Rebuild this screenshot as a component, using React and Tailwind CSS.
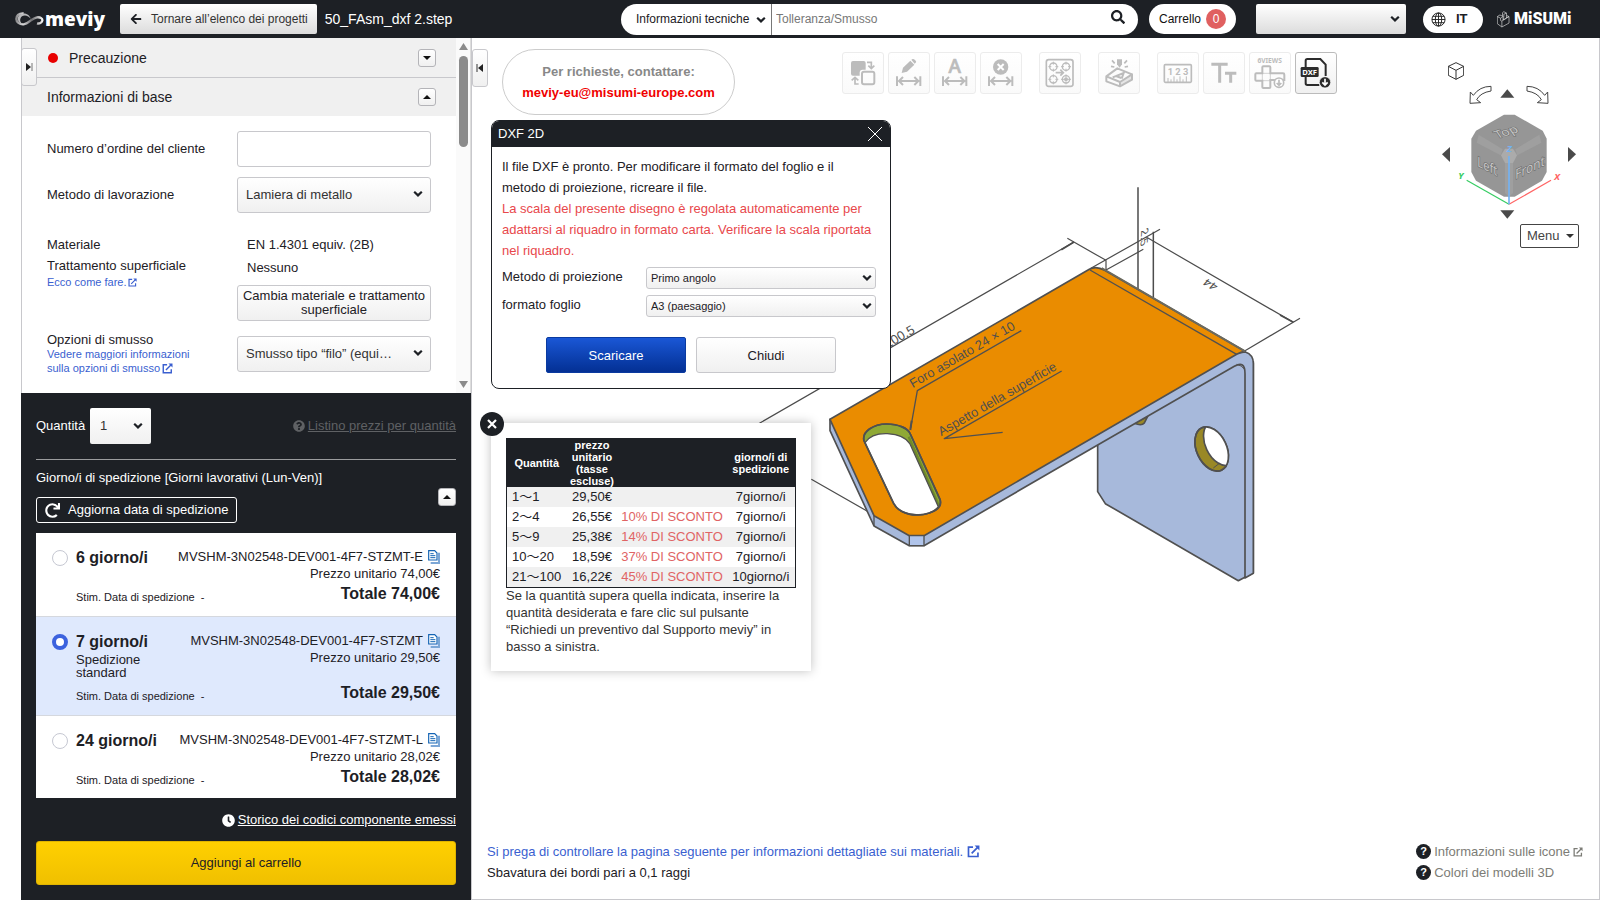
import React from "react";
import { FaArrowLeft, FaSearch, FaQuestionCircle, FaClock, FaRedo } from "react-icons/fa";

const panelButton = "border border-[#c8c8cc] rounded-[3px] bg-gradient-to-b from-white to-[#f0f0f0]";

function Chevron({ className }) {
  return (
    <svg viewBox="0 0 10 8" className={"pointer-events-none absolute h-2 w-[10px] " + className} aria-hidden="true">
      <path d="M1.2 1.8 5 5.4 8.8 1.8" fill="none" stroke="#1d2025" strokeWidth="2.2" />
    </svg>
  );
}

function ExternalIcon({ className }) {
  return (
    <svg viewBox="0 0 14 14" className={"inline-block shrink-0 " + className} fill="none" stroke="currentColor" strokeWidth="1.8" aria-hidden="true">
      <path d="M6.5 2.2H1.6v10.2h10.2V8M5 9l7-7" />
      <path d="M8.2.6h5.200v5.200Z" fill="currentColor" stroke="none" />
    </svg>
  );
}

function HelpBadge() {
  return (
    <span aria-hidden="true" className="flex h-[15px] w-[15px] shrink-0 items-center justify-center rounded-full bg-[#1d2025] text-[11px] leading-none font-bold text-white">?</span>
  );
}

function Toggle({ up, label }) {
  return (
    <button aria-label={label} className="flex h-[18px] w-[18px] shrink-0 items-center justify-center rounded-[3px] border border-[#b4b4b8] bg-gradient-to-b from-white to-[#f0f0f0]">
      <svg viewBox="0 0 8 4" className="h-1 w-2" fill="#111">
        <path d={up ? "M0 4 4 0 8 4Z" : "M0 0h8L4 4Z"} />
      </svg>
    </button>
  );
}

function CopyIcon() {
  return (
    <svg viewBox="0 0 36 42" className="h-[14px] w-3" aria-hidden="true">
      <path d="M33 8v31H8" fill="none" stroke="#7ba6d6" strokeWidth="6" />
      <path d="M2 2h18l7 7v21H2Z" fill="#fff" stroke="#1565b5" strokeWidth="3.500" />
      <path d="M7 11h10M7 17h15M7 23h15" stroke="#1565b5" strokeWidth="3" />
    </svg>
  );
}

function Header() {
  return (
    <header className="flex h-[38px] shrink-0 items-center bg-[#1d2025] pr-[28px] pl-[15px] text-xs text-white">
      <a href="#" className="flex w-[105px] items-center" aria-label="meviy">
        <svg viewBox="0 0 87 42" className="h-[14px] w-[29px]">
          <defs>
            <linearGradient id="loop" x1="0" x2="1">
              <stop offset="0" stopColor="#8d8d8f" />
              <stop offset=".25" stopColor="#d9d9da" />
              <stop offset=".6" stopColor="#6f6f72" />
              <stop offset="1" stopColor="#f1f1f1" />
            </linearGradient>
          </defs>
          <path d="M26 4C10 3 4 12 4 21s9 17 22 16c15-1 24-19 40-21 11-1 17 4 16 10s-9 10-16 8" fill="none" stroke="url(#loop)" strokeWidth="7" />
          <path d="M14 8C4 17 8 33 24 37c-9-5-12-16-3-24 8-6 20-2 26 7-4-15-22-20-33-12Z" fill="#b9b9bb" />
        </svg>
        <span className="ml-px font-['Open_Sans',sans-serif] text-[19px] leading-[24px] font-extrabold">meviy</span>
      </a>
      <button className="flex h-[30px] items-center gap-[9px] rounded-[2px] bg-gradient-to-b from-white to-[#dcdcdc] px-[10px] pr-[9px] text-[#333]">
        <FaArrowLeft className="h-3 w-3 text-[#1d2025]" />
        Tornare all’elenco dei progetti
      </button>
      <h1 className="ml-2 text-sm">50_FAsm_dxf 2.step</h1>
      <div className="ml-auto flex items-center">
        <form className="flex h-[31px] w-[517px] items-center overflow-hidden rounded-full bg-white text-[#1d2025]" onSubmit={(e) => e.preventDefault()}>
          <div className="relative h-full w-[151px] border-r border-[#777]">
            <select aria-label="Categoria di ricerca" className="h-full w-full appearance-none bg-transparent pl-[15px]">
              <option>Informazioni tecniche</option>
            </select>
            <Chevron className="top-3 right-[5px]" />
          </div>
          <input aria-label="Cerca" placeholder="Tolleranza/Smusso" className="h-full min-w-0 flex-1 bg-transparent px-1 outline-none placeholder:text-[#777]" />
          <button aria-label="Avvia ricerca" className="mr-[13px] mb-1">
            <FaSearch className="h-[14px] w-[14px]" />
          </button>
        </form>
        <button className="ml-[11px] flex h-[30px] w-[87px] items-center gap-[5px] rounded-full bg-white pl-[10px] text-[#111]">
          Carrello
          <span className="flex h-5 w-5 items-center justify-center rounded-full bg-[#e06060] text-white">0</span>
        </button>
        <div className="relative ml-5 h-[30px] w-[150px]">
          <select aria-label="Account" className="h-full w-full appearance-none rounded-[2px] bg-gradient-to-b from-white to-[#dcdcdc] pl-3 text-[#222]">
            <option> </option>
          </select>
          <Chevron className="top-[11px] right-[6px]" />
        </div>
        <button className="ml-[17px] flex h-[27px] w-[60px] items-center gap-[10px] rounded-full bg-white pl-2 text-[#1d2025]">
          <svg viewBox="0 0 16 16" className="h-[15px] w-[15px]" fill="none" stroke="#222" strokeWidth="1">
            <circle cx="8" cy="8" r="7" />
            <ellipse cx="8" cy="8" rx="3.4" ry="7" />
            <path d="M8 1v14M1 8h14M2 4.6h12M2 11.4h12" />
          </svg>
          <span className="text-[13px] font-bold">IT</span>
        </button>
        <a href="#" className="ml-[14px] flex items-center gap-1" aria-label="MiSUMi">
          <svg viewBox="0 0 40 50" className="h-[17px] w-[13px]" fill="none" stroke="#ddd" strokeWidth="2">
            <path d="m1 16 10 5 8-5v10l10-5V5l-8-4-4 3v11M1 16l8-5 10 5M1 16v22l14 10V30l-4-2v-7M15 48l22-12V16l-8 4M15 30l4-3v-6M29 21l-10 6M29 5l-8 4v10M29 20l8-4-8-4" />
          </svg>
          <span className="w-[58px] font-['Roboto',sans-serif] text-base leading-5 font-black">MiSUMi</span>
        </a>
      </div>
    </header>
  );
}

function FormSelect({ id, children, className = "" }) {
  return (
    <div className={"relative h-9 w-[194px] " + className}>
      <select id={id} className={"h-full w-full appearance-none pl-2 text-[13px] text-[#333] " + panelButton}>
        <option>{children}</option>
      </select>
      <Chevron className="top-[13px] right-2" />
    </div>
  );
}

function BaseInfo() {
  return (
    <section className="relative flex min-h-0 flex-1 overflow-hidden border-l border-[#c8c8cc] bg-white">
      <div className="min-w-0 flex-1">
        <div className="flex h-10 items-center border-b border-[#c8c8cc] bg-[#f0f0f0] pr-5 pl-[26px] text-sm">
          <span className="mr-[11px] h-[10px] w-[10px] rounded-full bg-[#e80000]" />
          <h2 className="flex-1">Precauzione</h2>
          <Toggle label="Apri precauzione" />
        </div>
        <div className="flex h-[38px] items-center bg-[#f0f0f0] pr-5 pl-[25px] text-sm">
          <h2 className="flex-1">Informazioni di base</h2>
          <Toggle up label="Chiudi informazioni di base" />
        </div>
        <div className="grid grid-cols-[190px_194px] pt-[15px] pl-[25px]">
          <label htmlFor="ordine" className="mb-[10px] self-center">Numero d’ordine del cliente</label>
          <input id="ordine" className="mb-[10px] h-9 w-full rounded-[3px] border border-[#c8c8cc] px-2" />
          <label htmlFor="metodo" className="self-center">Metodo di lavorazione</label>
          <FormSelect id="metodo">Lamiera di metallo</FormSelect>
          <div className="mt-[21px] leading-[21px]">
            <p>Materiale</p>
            <p>Trattamento superficiale</p>
            <a href="#" className="flex items-center gap-[2px] text-[11px] leading-3 text-[#3a5fd0]">
              Ecco come fare. <ExternalIcon className="h-[9px] w-[9px]" />
            </a>
          </div>
          <div className="mt-5 leading-[23px]">
            <p className="pl-[10px]">EN 1.4301 equiv. (2B)</p>
            <p className="pl-[10px]">Nessuno</p>
            <button className={"mt-[6px] h-9 w-full leading-[14px] " + panelButton}>Cambia materiale e trattamento superficiale</button>
          </div>
          <div className="mt-[11px]">
            <label htmlFor="smusso" className="block leading-[15px]">Opzioni di smusso</label>
            <a href="#" className="block text-[11px] leading-[14px] text-[#3a5fd0]">
              Vedere maggiori informazioni
              <span className="flex items-center gap-[2px]">sulla opzioni di smusso <ExternalIcon className="h-[11px] w-[11px]" /></span>
            </a>
          </div>
          <FormSelect id="smusso" className="mt-[15px]">Smusso tipo “filo” (equi…</FormSelect>
        </div>
        <div className="mt-[18px] h-1 border-t border-[#c8c8cc] bg-[#f0f0f0]" />
      </div>
      <div className="flex w-[15px] flex-col items-center border-r border-[#ddd] bg-[#fafafa] py-[5px]">
        <svg viewBox="0 0 9 7" className="h-[7px] w-[9px]" fill="#8b8b8b"><path d="M0 7 4.500 0 9 7Z" /></svg>
        <div className="mt-[6px] h-[91px] w-[9px] rounded-full bg-[#8b8b8b]" />
        <svg viewBox="0 0 9 7" className="mt-auto h-[7px] w-[9px]" fill="#8b8b8b"><path d="M0 0h9L4.500 7Z" /></svg>
      </div>
      <button aria-label="Espandi pannello" className={"absolute top-[10px] -left-px flex h-[38px] w-4 items-center justify-center " + panelButton}>
        <svg viewBox="0 0 8 8" className="h-2 w-2"><path d="M1 0v8l5-4Z" fill="#222" /><path d="M7 0v8" stroke="#777" /></svg>
      </button>
    </section>
  );
}

const offers = [
  { days: "6 giorno/i", code: "MVSHM-3N02548-DEV001-4F7-STZMT-E", unit: "74,00€", total: "74,00€" },
  { days: "7 giorno/i", note: "Spedizione standard", code: "MVSHM-3N02548-DEV001-4F7-STZMT", unit: "29,50€", total: "29,50€", selected: true },
  { days: "24 giorno/i", code: "MVSHM-3N02548-DEV001-4F7-STZMT-L", unit: "28,02€", total: "28,02€" },
];

function Offer({ offer }) {
  return (
    <li className={"flex border-b border-[#d5d8de] px-4 pt-[15px] pb-3 last:border-b-0 last:pb-[11px] " + (offer.selected ? "bg-[#dfe9fd]" : "bg-white")}>
      <input
        type="radio"
        name="offerta"
        defaultChecked={offer.selected}
        aria-label={offer.days}
        className="mt-[2px] mr-2 h-4 w-4 shrink-0 appearance-none rounded-full border border-[#c6c8d2] bg-white checked:border-[4px] checked:border-[#3c62de]"
      />
      <div className="min-w-0 flex-1">
        <div className="flex justify-between">
          <div>
            <p className="text-base leading-[19px] font-bold">{offer.days}</p>
            {offer.note && <p className="mt-[2px] mb-[2px] w-[70px] leading-[13px]">{offer.note}</p>}
          </div>
          <div className="text-right leading-[17px]">
            <p className="flex items-center justify-end gap-[5px]">{offer.code}<button aria-label="Copia codice"><CopyIcon /></button></p>
            <p>Prezzo unitario {offer.unit}</p>
          </div>
        </div>
        <div className="mt-[2px] flex items-end justify-between">
          <p className="text-[11px] leading-[14px]">Stim. Data di spedizione&nbsp; -</p>
          <p className="text-base leading-5 font-bold">Totale {offer.total}</p>
        </div>
      </div>
    </li>
  );
}

function QuotePanel() {
  return (
    <section className="shrink-0 bg-[#1d2025] px-[15px] py-[15px] text-white">
      <div className="flex h-9 items-center">
        <label htmlFor="quantita" className="w-[54px]">Quantità</label>
        <div className="relative h-9 w-[61px]">
          <select id="quantita" className="h-full w-full appearance-none rounded-[2px] bg-gradient-to-b from-white to-[#f0f0f0] pl-[10px] text-[#333]">
            <option>1</option>
          </select>
          <Chevron className="top-[14px] right-2" />
        </div>
        <a href="#" className="ml-auto flex items-center gap-[3px] text-[#5f6164] underline">
          <FaQuestionCircle className="h-3 w-3" />Listino prezzi per quantità
        </a>
      </div>
      <div className="mt-[15px] border-t border-[#9b9c9e]" />
      <h3 className="mt-[9px] leading-[18px]">Giorno/i di spedizione [Giorni lavorativi (Lun-Ven)]</h3>
      <div className="mt-px flex items-start justify-between">
        <button className="mt-[9px] flex h-[26px] w-[201px] items-center gap-2 rounded-[3px] border border-white pl-2">
          <FaRedo className="h-[15px] w-[15px]" />Aggiorna data di spedizione
        </button>
        <Toggle up label="Chiudi giorni di spedizione" />
      </div>
      <ul className="mt-[10px] text-[#1d2025]">
        {offers.map((o) => <Offer key={o.code} offer={o} />)}
      </ul>
      <div className="mt-[13px] flex justify-end leading-[18px]">
        <a href="#" className="flex items-center gap-[3px] underline"><FaClock className="h-[13px] w-[13px]" />Storico dei codici componente emessi</a>
      </div>
      <button className="mt-3 h-11 w-full rounded-[3px] border border-[#e0b400] bg-gradient-to-b from-[#ffd000] to-[#f0c000] text-[#1d2025]">Aggiungi al carrello</button>
    </section>
  );
}

const dimension = <path d="M27 73v29M97 73v29M32 87h60M45 75 33 87l12 12M79 75l12 12-12 12" strokeWidth="6" />;

const toolGroups = [
  [
    {
      label: "Scambia facce",
      art: (
        <>
          <path d="M33 27h32q6 0 6 6v20H62q-9 0-9 9v9H33q-6 0-6-6V33q0-6 6-6Z" fill="currentColor" stroke="none" />
          <rect x="60" y="59" width="37" height="38" rx="6" strokeWidth="6" />
          <path d="M75 31h13v18M79 41l9 9 9-9M50 96H39V77M29 85l10-9 10 9" strokeWidth="5" />
        </>
      ),
    },
    {
      label: "Modifica quota",
      art: (
        <>
          <path d="m41 63 4-16 22-21 12 12-22 21ZM70 23l4-2q3-1 6 2l3 3q3 3 0 6l-3 3Z" fill="currentColor" stroke="none" />
          {dimension}
        </>
      ),
    },
    {
      label: "Testo quota",
      art: (
        <>
          <text x="62" y="63" textAnchor="middle" fontSize="57" fontWeight="500" fontFamily="Noto Sans, sans-serif" fill="currentColor" stroke="currentColor" strokeWidth="2">A</text>
          {dimension}
        </>
      ),
    },
    {
      label: "Elimina quota",
      art: (
        <>
          <circle cx="62" cy="45" r="23" fill="currentColor" stroke="none" />
          <path d="m53 36 18 18M71 36 53 54" stroke="#fff" strokeWidth="6" />
          {dimension}
        </>
      ),
    },
  ],
  [
    {
      label: "Gruppo fori",
      art: (
        <>
          <rect x="22" y="23" width="80" height="80" rx="7" strokeWidth="5" />
          {[[43, 44], [81, 44], [43, 82], [81, 82]].map(([x, y]) => (
            <g key={x + "-" + y} strokeWidth="4">
              <circle cx={x} cy={y} r="11" />
              <path d={`M${x - 15} ${y}h9M${x + 6} ${y}h9M${x} ${y - 15}v9M${x} ${y + 6}v9`} strokeWidth="3" />
            </g>
          ))}
          <circle cx="81" cy="82" r="6" fill="currentColor" stroke="none" />
          <path d="M50 62h22M64 53l9 9-9 9" strokeWidth="5" />
        </>
      ),
    },
  ],
  [
    {
      label: "Marcatura",
      art: (
        <>
          <path d="m25 73 33-24 44 18-36 23ZM25 73v15l41 15 36-20V67L66 90v13" strokeWidth="6" strokeLinejoin="round" />
          <path d="M66 90l36-23v16l-36 20Z" fill="currentColor" fillOpacity=".35" stroke="none" />
          <path d="m44 76 33-13-6 17M54 72l16 6" strokeWidth="6" />
          <path d="M57 22h15v15l-7 10-8-10Z" fill="currentColor" stroke="none" />
          <path d="m42 25 8 9M39 43l10 2M87 25l-8 9M90 43l-10 2" strokeWidth="5" />
        </>
      ),
    },
  ],
  [
    {
      label: "Misura",
      art: (
        <>
          <rect x="22" y="38" width="81" height="53" rx="3" strokeWidth="5" />
          <text x="63" y="69" textAnchor="middle" fontSize="28" fontWeight="700" fontFamily="Roboto, sans-serif" fill="currentColor" stroke="none">1 2 3</text>
          <path d="M33 78v13M42 82v9M51 73v18M60 82v9M69 73v18M78 82v9M88 73v18" strokeWidth="3" />
        </>
      ),
    },
    { label: "Testo", art: <path d="M25 37h49M50 37v55M66 64h34M83 64v28" strokeWidth="9" /> },
    {
      label: "6 viste",
      art: (
        <>
          <text x="62" y="33" textAnchor="middle" fontSize="20" fontWeight="700" fontFamily="Noto Sans, sans-serif" fill="currentColor" stroke="none">6VIEWS</text>
          <path d="M43 43h18q3 0 3 3v18h38q4 0 4 4v16H64v21q0 3-3 3H43q-3 0-3-3V86H22q-3 0-3-3V67q0-3 3-3h18V46q0-3 3-3Z" strokeWidth="6" />
          <path d="M40 64h24v22H40Z" strokeWidth="2" />
          <circle cx="90" cy="92" r="14" fill="#fff" strokeWidth="5" />
          <path d="M90 83v16M83 93l7 7 7-7" strokeWidth="5" />
        </>
      ),
    },
    {
      label: "DXF 2D",
      active: true,
      art: (
        <>
          <path d="M32 45V26q0-5 5-5h39l16 17v34M32 74v20q0 5 5 5h36" strokeWidth="6" />
          <rect x="17" y="45" width="54" height="30" rx="4" fill="currentColor" stroke="none" />
          <text x="44" y="68" textAnchor="middle" fontSize="23" fontWeight="700" fontFamily="Noto Sans, sans-serif" fill="#fff" stroke="none">DXF</text>
          <circle cx="90" cy="91" r="17" fill="currentColor" stroke="#fff" strokeWidth="2" />
          <path d="M90 80v18M82 91l8 8 8-8" stroke="#fff" strokeWidth="5" />
        </>
      ),
    },
  ],
];

function Toolbar() {
  return (
    <div className="absolute top-[14px] right-[262px] flex gap-[17px]">
      {toolGroups.map((group) => (
        <div key={group[0].label} className="flex gap-1">
          {group.map((t) => (
            <button
              key={t.label}
              aria-label={t.label}
              className={"h-[42px] w-[42px] rounded-[3px] border bg-gradient-to-b from-white " + (t.active ? "border-[#bbb] to-[#f0f0f0] text-[#2b2b2b]" : "border-[#ececec] to-[#fafafa] text-[#bcbcbc]")}
            >
              <svg viewBox="3 3 120 120" className="h-10 w-10" fill="none" stroke="currentColor">{t.art}</svg>
            </button>
          ))}
        </div>
      ))}
    </div>
  );
}

function Model() {
  return (
    <svg className="absolute inset-0 h-full w-full" aria-label="Modello 3D" fontFamily="Liberation Sans, sans-serif">
      <defs>
        <clipPath id="hole"><ellipse cx="1235" cy="807" rx="45" ry="70" transform="rotate(-25 1235 807)" /></clipPath>
      </defs>
      <g transform="translate(328 142) scale(.333333)" fill="none" stroke="#505050" strokeWidth="5" strokeLinejoin="round">
        <g strokeWidth="3.600" stroke="#4c4c4c">
          <path d="M822 186-150 746M34 898l188 107M802 175l116 66v32M870 266l210-118M918 270l112-62M1040 172l440 255M1330 515l170-100" />
          <path d="M1014 22v310M1060 155v202" strokeWidth="4.500" />
          <path d="m822 186-38 23M1480 427l-40-22" strokeWidth="5" />
        </g>
        <path d="M893 780v155l23 36 399 231 45-24V545L1320 530Z" fill="#a7b9db" />
        <ellipse cx="1235" cy="807" rx="45" ry="70" transform="rotate(-25 1235 807)" fill="#998826" />
        <g clipPath="url(#hole)">
          <ellipse cx="1261" cy="790" rx="45" ry="70" transform="rotate(-25 1261 790)" fill="#fff" />
          <path d="m1240 864 18-14" strokeWidth="3" />
        </g>
        <ellipse cx="1235" cy="807" rx="45" ry="70" transform="rotate(-25 1235 807)" />
        <path d="M1003 730q22 9 30-1l10-20Z" fill="#998826" />
        <path d="M90 718v34l132 286 106 59h44l521-302 410-236q32-19 32 22v613l25-14V550q0-26-24-34l-36 5-938 544Z" fill="#a7b9db" />
        <path d="m1310 553q14 2 25 16" strokeWidth="3" />
        <path d="M90 718 868 268q20-12 46 3l421 243q-12 2-25 9L372 1067h-44l-106-60Z" fill="#ea8c00" />
        <path d="m870 270 440 253" strokeWidth="4" />
        <path d="m905 264 430 250" stroke="#6c6a5e" strokeWidth="6" />
        <path d="M328 1067h44v30h-44Z" fill="#b0c4ea" strokeWidth="4" />
        <path d="M222 1007v31" strokeWidth="4" />
        <path d="M192 782C185 755 220 732 260 732c35 0 65 13 71 30l89 196c5 17-5 32-30 40-40 14-90 7-109-28Z" fill="#8fa935" />
        <path d="M326 770 417 978" stroke="#6f8a2a" strokeWidth="7" />
        <path d="M195 788c15-23 40-28 67-27 33 2 58 14 68 31l85 188c-15 20-45 25-65 24-35-1-60-14-70-36Z" fill="#fff" strokeWidth="4" />
        <path d="M192 782C185 755 220 732 260 732c35 0 65 13 71 30l89 196c5 17-5 32-30 40-40 14-90 7-109-28Z" />
        <path d="M664 452 352 632l-20 112M785 573 433 776l175-19" strokeWidth="4" />
        <path d="m335 722-4 28" strokeWidth="6" />
        <g fill="#4f4f4f" stroke="none">
          <text fontSize="39" transform="translate(338 625) rotate(-30)">Foro asolato 24 × 10</text>
          <text fontSize="39" transform="translate(424 769) rotate(-30)">Aspetto della superficie</text>
          <text fontSize="39" textAnchor="end" transform="translate(347 457) rotate(-30)">100.5</text>
          <text fontSize="38" transform="matrix(-.86 -.5 .6 -.65 1257 316)">44</text>
          <text fontSize="36" transform="matrix(-.05 1 -.87 .5 1024 152)">2.5</text>
        </g>
      </g>
    </svg>
  );
}

function ViewNavigator() {
  return (
    <nav aria-label="Orientamento vista" className="absolute top-5 right-[19px] h-[192px] w-[140px]">
      <button aria-label="Vista iniziale" className="absolute top-1 left-2">
        <svg viewBox="744 186 48 54" className="h-[18px] w-4" fill="none" stroke="#333" strokeWidth="3"><path d="m768 188 23 11v27l-23 12-23-12v-27ZM745 199l23 12 23-12M768 211v27" /></svg>
      </button>
      <button aria-label="Ruota a sinistra" className="absolute top-[27px] left-[29px]">
        <svg viewBox="806 255 69 57" className="h-[19px] w-[23px]" fill="#fff" stroke="#444" strokeWidth="3"><path d="M872 259v14q-32 5-43 26l12 9-32 2 1-34 9 10q19-27 53-27Z" /></svg>
      </button>
      <button aria-label="Su" className="absolute top-[31px] left-[60px]">
        <svg viewBox="901 268 45 27" className="h-[9px] w-[15px]" fill="#4a4a4a"><path d="m923 269 21 25h-42Z" /></svg>
      </button>
      <button aria-label="Ruota a destra" className="absolute top-[27px] left-[86px]">
        <svg viewBox="980 255 69 57" className="h-[19px] w-[23px]" fill="#fff" stroke="#444" strokeWidth="3"><path d="M983 259v14q32 5 43 26l-12 9 32 2-1-34-9 10q-19-27-53-27Z" /></svg>
      </button>
      <button aria-label="Sinistra" className="absolute top-[89px] left-[2px]">
        <svg viewBox="726 441 24 45" className="h-[15px] w-2" fill="#4a4a4a"><path d="M726 463 750 441v45Z" /></svg>
      </button>
      <svg viewBox="774 339 312 279" className="absolute top-[55px] left-[18px] h-[93px] w-[104px]" fontFamily="Noto Sans, sans-serif">
        <path d="M912 344h32l84 48 12 24v100l-14 26-82 48h-32l-84-48-14-26V416l14-24Z" fill="#969696" />
        <path d="m836 404 72 44-6 18-72-38ZM1018 404l-72 44 6 18 72-38Z" fill="#9f9f9f" />
        <path d="M915 489h24v90l-12 11-12-11Z" fill="#9f9f9f" />
        <path d="m903 466 12-20h24l12 20-12 23h-24Z" fill="#ababab" />
        <g fontSize="41" fill="#c4c4c4" stroke="#707070" strokeWidth="4" paintOrder="stroke">
          <text textAnchor="middle" transform="matrix(.94 -.3 .5 .72 925 406)">Top</text>
          <text textAnchor="middle" transform="matrix(.82 .4 0 1 862 513)">Left</text>
          <text textAnchor="middle" transform="matrix(.86 -.42 0 1 990 517)">Front</text>
        </g>
        <g strokeWidth="3.500" fill="none">
          <path d="m800 541 127 72" stroke="#35cc62" />
          <path d="m927 613 126-72" stroke="#ff6464" />
          <path d="M927 613V468" stroke="#74b2f2" strokeWidth="5" />
        </g>
        <g fontSize="28" fontWeight="700" textAnchor="middle" fontStyle="italic">
          <text x="928" y="457" fill="#74b2f2">Z</text>
          <text x="783" y="538" fill="#35cc62">Y</text>
          <text x="1071" y="540" fill="#ff6464">X</text>
        </g>
      </svg>
      <button aria-label="Destra" className="absolute top-[89px] left-[128px]">
        <svg viewBox="1104 441 24 45" className="h-[15px] w-2" fill="#4a4a4a"><path d="M1128 463 1104 441v45Z" /></svg>
      </button>
      <button aria-label="Giù" className="absolute top-[152px] left-[60px]">
        <svg viewBox="901 629 45 27" className="h-[9px] w-[15px]" fill="#4a4a4a"><path d="M902 630h42l-21 25Z" /></svg>
      </button>
      <button className="absolute top-[166px] left-[80px] flex h-6 w-[59px] items-center gap-[6px] rounded-[2px] border border-[#444] bg-white pl-[6px] text-[#444]">
        Menu
        <svg viewBox="0 0 8 4" className="h-1 w-2" fill="#333"><path d="M0 0h8L4 4Z" /></svg>
      </button>
    </nav>
  );
}

function DxfSelect({ id, label, value }) {
  return (
    <div className="flex h-7 items-start">
      <label htmlFor={id} className="w-36 leading-[22px]">{label}</label>
      <div className="relative mt-px h-[22px] flex-1">
        <select id={id} className={"h-full w-full appearance-none pl-1 text-[11px] " + panelButton}><option>{value}</option></select>
        <Chevron className="top-[7px] right-1" />
      </div>
    </div>
  );
}

function DxfDialog() {
  return (
    <div role="dialog" aria-labelledby="dxf-title" className="absolute top-[82px] left-[19px] w-[400px] overflow-hidden rounded-lg border border-[#1d2025] bg-white">
      <div className="flex h-[26px] items-center justify-between bg-[#1d2025] pr-[7px] pl-[6px] text-white">
        <h2 id="dxf-title">DXF 2D</h2>
        <button aria-label="Chiudi finestra">
          <svg viewBox="0 0 16 16" className="h-4 w-4" stroke="#fff"><path d="m1 1 14 14M15 1 1 15" /></svg>
        </button>
      </div>
      <div className="px-[10px] pt-[9px] pb-[15px] leading-[21px]">
        <p>Il file DXF è pronto. Per modificare il formato del foglio e il metodo di proiezione, ricreare il file.</p>
        <p className="mb-[5px] text-[#e8484c]">La scala del presente disegno è regolata automaticamente per adattarsi al riquadro in formato carta. Verificare la scala riportata nel riquadro.</p>
        <div className="pr-1">
          <DxfSelect id="proiezione" label="Metodo di proiezione" value="Primo angolo" />
          <DxfSelect id="foglio" label="formato foglio" value="A3 (paesaggio)" />
        </div>
        <div className="mt-[15px] flex justify-center gap-[10px]">
          <button className="h-9 w-[140px] rounded-[2px] border border-[#0a3aa0] bg-gradient-to-b from-[#1a57d6] to-[#043094] text-white">Scaricare</button>
          <button className={"h-9 w-[140px] " + panelButton}>Chiudi</button>
        </div>
      </div>
    </div>
  );
}

const priceRows = [
  ["1～1", "29,50€", "", "7giorno/i"],
  ["2～4", "26,55€", "10% DI SCONTO", "7giorno/i"],
  ["5～9", "25,38€", "14% DI SCONTO", "7giorno/i"],
  ["10～20", "18,59€", "37% DI SCONTO", "7giorno/i"],
  ["21～100", "16,22€", "45% DI SCONTO", "10giorno/i"],
];

function PricePopup() {
  return (
    <div className="absolute top-[385px] left-[19px] w-80 bg-white px-[15px] pt-[15px] pb-4 shadow-[0_0_10px_rgba(0,0,0,0.25)]">
      <button aria-label="Chiudi listino" className="absolute -top-[11px] -left-[11px] flex h-6 w-6 items-center justify-center rounded-full bg-[#1d2025]">
        <svg viewBox="0 0 10 10" className="h-[10px] w-[10px]" stroke="#fff" strokeWidth="2.200"><path d="m1 1 8 8M9 1 1 9" /></svg>
      </button>
      <table className="w-full table-fixed border-collapse border border-[#1d2025]">
        <colgroup>
          <col className="w-[60px]" />
          <col className="w-[51px]" />
          <col />
          <col className="w-[69px]" />
        </colgroup>
        <thead className="bg-[#1d2025] text-[11px] leading-3 text-white">
          <tr>
            <th className="p-0">Quantità</th>
            <th className="p-0">prezzo unitario (tasse escluse)</th>
            <td className="p-0" />
            <th className="p-0">giorno/i di spedizione</th>
          </tr>
        </thead>
        <tbody>
          {priceRows.map(([q, price, discount, days]) => (
            <tr key={q} className="h-5 text-center leading-5 odd:bg-[#f0f0f0]">
              <td className="p-0 pl-[5px] text-left whitespace-nowrap">{q}</td>
              <td className="p-0">{price}</td>
              <td className="p-0 text-[#e06464]">{discount}</td>
              <td className="p-0">{days}</td>
            </tr>
          ))}
        </tbody>
      </table>
      <p className="-mt-px leading-[17px] text-[#333]">Se la quantità supera quella indicata, inserire la quantità desiderata e fare clic sul pulsante “Richiedi un preventivo dal Supporto meviy” in basso a sinistra.</p>
    </div>
  );
}

export default function App() {
  return (
    <div className="flex h-screen min-h-[760px] flex-col bg-white font-['Liberation_Sans','Noto_Sans_CJK_JP',sans-serif] text-[13px] leading-[18px] text-[#1d2025]">
      <Header />
      <div className="flex min-h-0 flex-1 pl-[21px]">
        <aside className="flex w-[450px] shrink-0 flex-col">
          <BaseInfo />
          <QuotePanel />
        </aside>
        <main className="relative min-w-0 flex-1 border border-t-0 border-[#c8c8cc]">
          <Model />
          <button aria-label="Comprimi pannello" className={"absolute top-[11px] left-0 flex h-[38px] w-4 items-center justify-center " + panelButton}>
            <svg viewBox="0 0 8 8" className="h-2 w-2"><path d="M7 0v8L2 4Z" fill="#222" /><path d="M1 0v8" stroke="#333" /></svg>
          </button>
          <div className="absolute top-[11px] left-[30px] h-[66px] w-[233px] rounded-[33px] border border-[#ccc] bg-white pt-[11px] text-center leading-[21px] font-bold">
            <p className="text-[#888]">Per richieste, contattare:</p>
            <a href="mailto:meviy-eu@misumi-europe.com" className="text-[#f00000]">meviy-eu@misumi-europe.com</a>
          </div>
          <Toolbar />
          <ViewNavigator />
          <DxfDialog />
          <PricePopup />
          <footer className="absolute right-4 bottom-4 left-[15px] flex justify-between leading-[21px]">
            <div>
              <a href="#" className="flex items-center gap-1 text-[#3a5fd0]">Si prega di controllare la pagina seguente per informazioni dettagliate sui materiali.<ExternalIcon className="h-[13px] w-[13px]" /></a>
              <p>Sbavatura dei bordi pari a 0,1 raggi</p>
            </div>
            <div className="text-[#7c7c76]">
              <a href="#" className="flex items-center gap-[3px]"><HelpBadge />Informazioni sulle icone <ExternalIcon className="h-[10px] w-[10px]" /></a>
              <a href="#" className="flex items-center gap-[3px]"><HelpBadge />Colori dei modelli 3D</a>
            </div>
          </footer>
        </main>
      </div>
    </div>
  );
}
